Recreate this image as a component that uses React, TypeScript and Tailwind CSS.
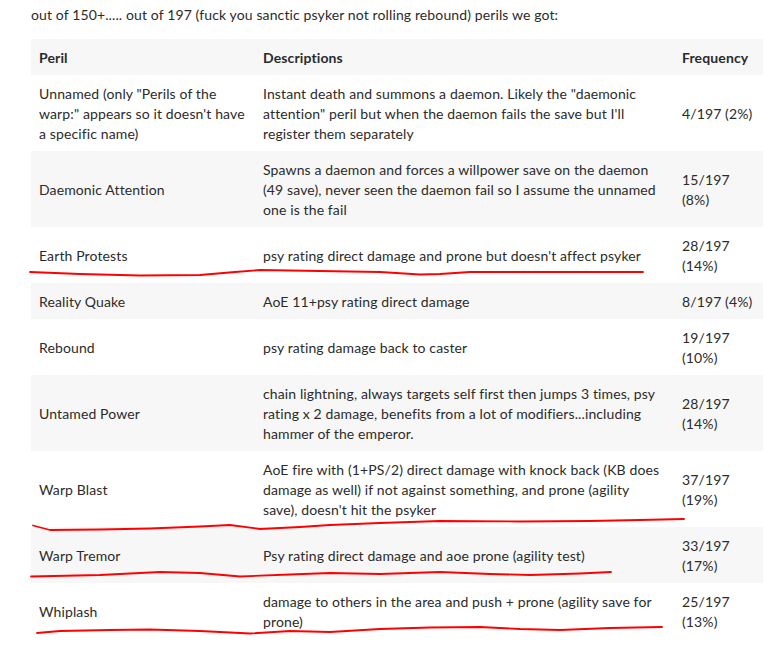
import React from 'react';

type Row = { peril: string; desc: string; freq: string };

const rows: Row[] = [
  {
    peril: 'Unnamed (only "Perils of the warp:" appears so it doesn\'t have a specific name)',
    desc: 'Instant death and summons a daemon. Likely the "daemonic attention" peril but when the daemon fails the save but I\'ll register them separately',
    freq: '4/197 (2%)',
  },
  {
    peril: 'Daemonic Attention',
    desc: 'Spawns a daemon and forces a willpower save on the daemon (49 save), never seen the daemon fail so I assume the unnamed one is the fail',
    freq: '15/197 (8%)',
  },
  {
    peril: 'Earth Protests',
    desc: "psy rating direct damage and prone but doesn't affect psyker",
    freq: '28/197 (14%)',
  },
  { peril: 'Reality Quake', desc: 'AoE 11+psy rating direct damage', freq: '8/197 (4%)' },
  { peril: 'Rebound', desc: 'psy rating damage back to caster', freq: '19/197 (10%)' },
  {
    peril: 'Untamed Power',
    desc: 'chain lightning, always targets self first then jumps 3 times, psy rating x 2 damage, benefits from a lot of modifiers...including hammer of the emperor.',
    freq: '28/197 (14%)',
  },
  {
    peril: 'Warp Blast',
    desc: "AoE fire with (1+PS/2) direct damage with knock back (KB does damage as well) if not against something, and prone (agility save), doesn't hit the psyker",
    freq: '37/197 (19%)',
  },
  {
    peril: 'Warp Tremor',
    desc: 'Psy rating direct damage and aoe prone (agility test)',
    freq: '33/197 (17%)',
  },
  {
    peril: 'Whiplash',
    desc: 'damage to others in the area and push + prone (agility save for prone)',
    freq: '25/197 (13%)',
  },
];

// hand drawn red scribbles over the table
const scribbles = [
  '30,272 80,274 140,275.5 200,275 235,272 260,270 320,271 380,272 420,274.5 440,274 470,272 535,272 600,272 643,272',
  '33,525.5 50,530 100,529.5 150,528.5 200,526.5 230,525 260,529 300,527 330,525 380,523 440,521 520,521.5 590,521 640,520 684,519',
  '31,576.5 100,575 160,572 200,573 240,576.5 290,574.5 330,573 380,574 440,572 490,574 530,575 580,573.5 611,572',
  '37,633 60,631 110,630 150,629.5 200,631 250,633.5 290,631 330,632 380,629 430,627.5 480,627 520,629 560,630 610,628 662,627',
];

export default function App() {
  return (
    <div
      className="relative w-[773px] h-[646px] overflow-hidden bg-white px-[31px] pt-[5px] text-[14px] leading-5 tracking-[0.12px] text-[#2b2b2b]"
      style={{ fontFamily: 'Lato, "Noto Sans", sans-serif' }}
    >
      <p>out of 150+..... out of 197 (fuck you sanctic psyker not rolling rebound) perils we got:</p>

      <table className="mt-[14px] w-[732px] table-fixed border-collapse">
        <colgroup>
          <col className="w-[224px]" />
          <col className="w-[419px]" />
          <col className="w-[89px]" />
        </colgroup>
        <thead>
          <tr className="bg-[#f7f7f7]">
            <th className="px-2 pt-[9px] pb-[7px] text-left font-bold">Peril</th>
            <th className="px-2 pt-[9px] pb-[7px] text-left font-bold">Descriptions</th>
            <th className="px-2 pt-[9px] pb-[7px] text-left font-bold">Frequency</th>
          </tr>
        </thead>
        <tbody>
          {rows.map((r, i) => (
            <tr key={r.peril} className={i % 2 === 1 ? 'bg-[#f7f7f7]' : 'bg-white'}>
              <td className="px-2 pt-[9px] pb-[7px] align-middle">{r.peril}</td>
              <td className="px-2 pt-[9px] pb-[7px] align-middle">{r.desc}</td>
              <td className="px-2 pt-[9px] pb-[7px] align-middle">{r.freq}</td>
            </tr>
          ))}
        </tbody>
      </table>

      <svg
        className="pointer-events-none absolute left-0 top-0"
        width="773"
        height="646"
        viewBox="0 0 773 646"
      >
        {scribbles.map((pts) => (
          <polyline
            key={pts}
            points={pts}
            fill="none"
            stroke="#ff0000"
            strokeWidth="1.8"
            strokeLinecap="round"
            strokeLinejoin="round"
          />
        ))}
      </svg>
    </div>
  );
}
